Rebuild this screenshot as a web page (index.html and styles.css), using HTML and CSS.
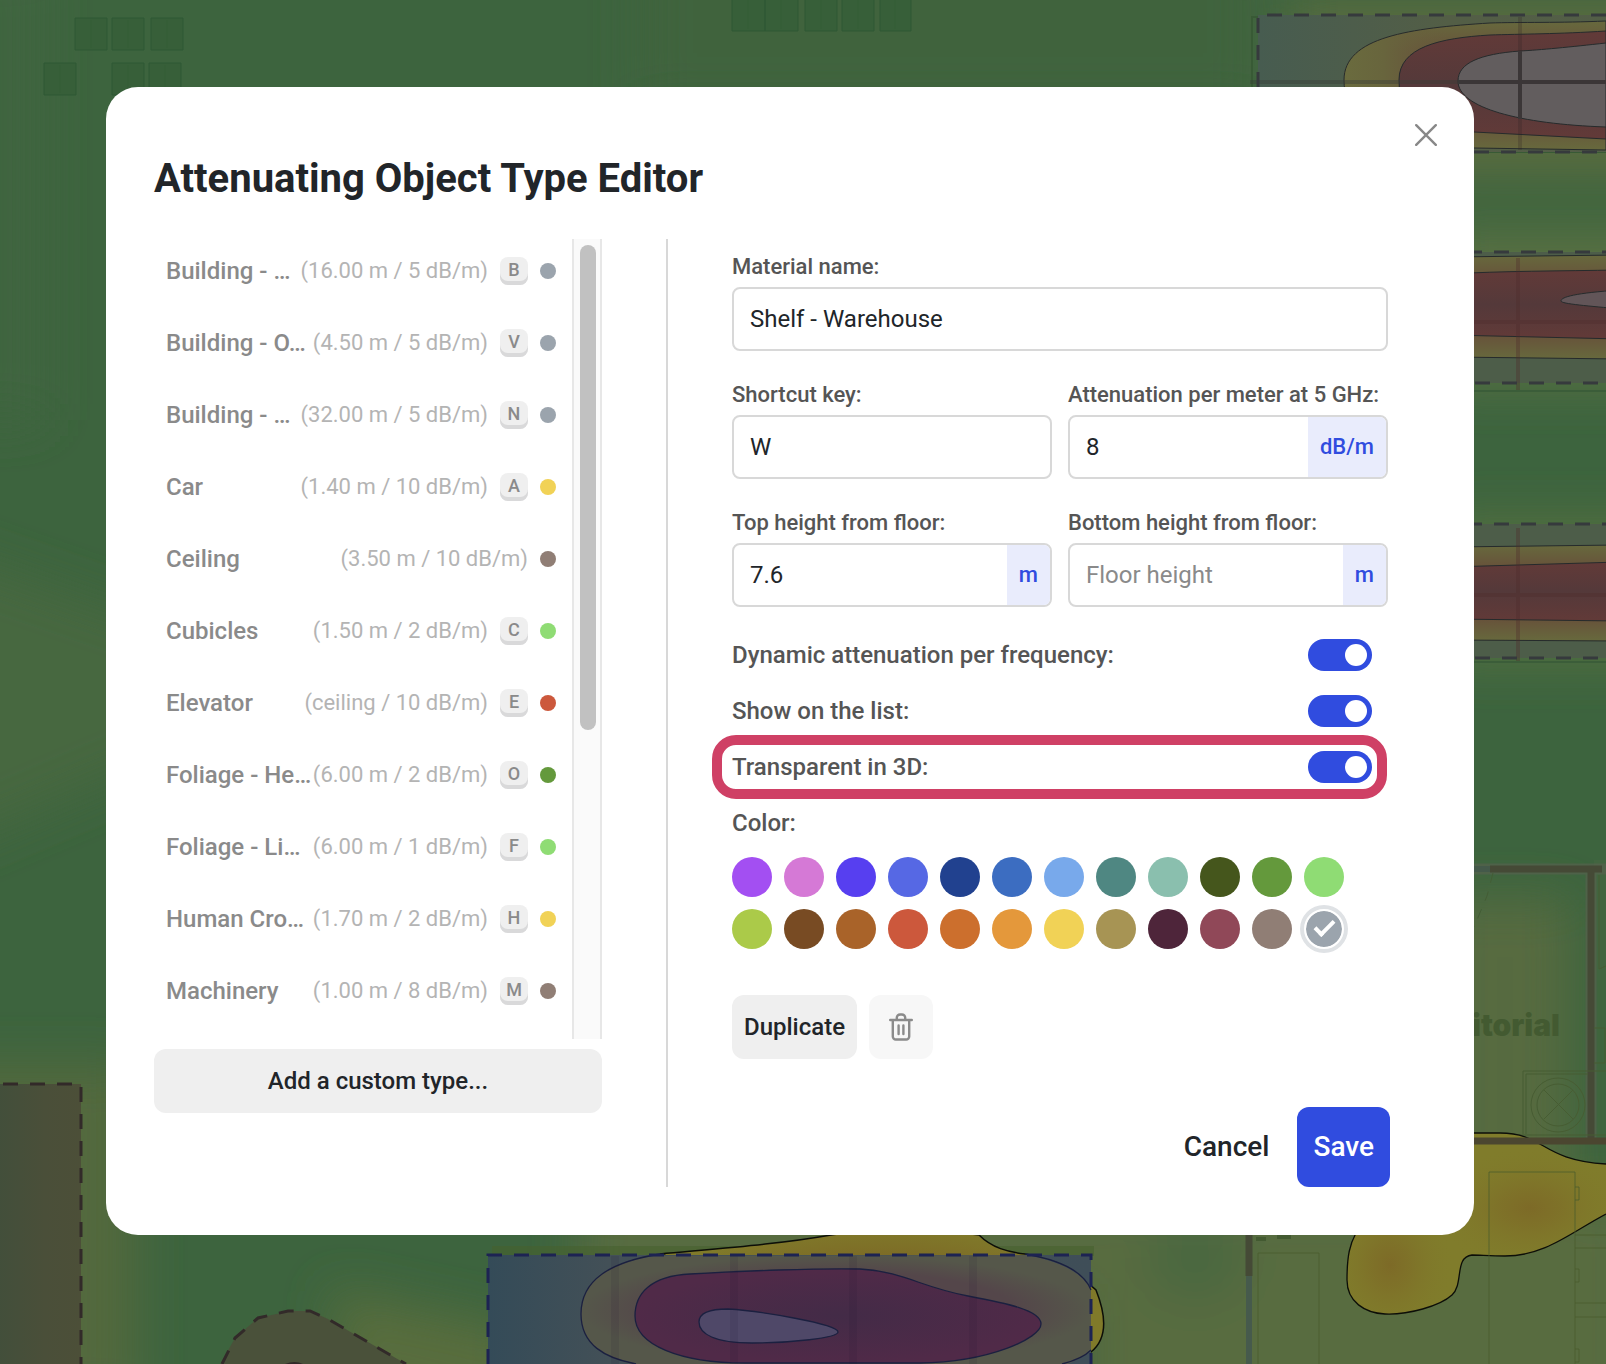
FILE: index.html
```html
<!DOCTYPE html>
<html lang="en">
<head>
<meta charset="utf-8">
<meta name="viewport" content="width=device-width, initial-scale=1">
<title>Attenuating Object Type Editor</title>
<link rel="stylesheet" href="styles.css">
</head>
<body>
<svg class="floorplan" viewBox="0 0 1606 1364" preserveAspectRatio="xMidYMid slice" aria-hidden="true">
  <defs>
    <filter id="soft" x="-50%" y="-50%" width="200%" height="200%"><feGaussianBlur stdDeviation="24"/></filter>
    <linearGradient id="rack" x1="0" x2="1"><stop offset="0" stop-color="#475c50"/><stop offset=".5" stop-color="#535e46"/><stop offset="1" stop-color="#525e47"/></linearGradient>
    <linearGradient id="warm" x1="0" x2="0" y1="0" y2="1"><stop offset="0" stop-color="#67693d"/><stop offset=".25" stop-color="#67503a"/><stop offset=".75" stop-color="#67503a"/><stop offset="1" stop-color="#67693d"/></linearGradient>
    <linearGradient id="warm-edge" x1="0" x2="1"><stop offset="0" stop-color="#6a6b3e"/><stop offset=".15" stop-color="#68653d"/><stop offset=".4" stop-color="#68603d" stop-opacity="0"/></linearGradient>
    <linearGradient id="hot" x1="0" x2="0" y1="0" y2="1"><stop offset="0" stop-color="#623a38"/><stop offset=".5" stop-color="#54393a"/><stop offset="1" stop-color="#623a38"/></linearGradient>
    <linearGradient id="block" x1="0" x2="1"><stop offset="0" stop-color="#414f3b"/><stop offset=".6" stop-color="#4a4f39"/><stop offset="1" stop-color="#4c4f38"/></linearGradient>
    <linearGradient id="blue" x1="0" x2="1"><stop offset="0" stop-color="#344b58"/><stop offset=".2" stop-color="#435057"/><stop offset="1" stop-color="#3f4e58"/></linearGradient>
    <radialGradient id="ring"><stop offset=".7" stop-color="#54464a"/><stop offset="1" stop-color="#55574a"/></radialGradient>
    <radialGradient id="core"><stop offset="0" stop-color="#432b47"/><stop offset="1" stop-color="#502a48"/></radialGradient>
    <radialGradient id="amber"><stop offset="0" stop-color="#7d6a27"/><stop offset=".3" stop-color="#7e6f28" stop-opacity=".8"/><stop offset="1" stop-color="#807c2b" stop-opacity="0"/></radialGradient>
    <radialGradient id="ember"><stop offset="0" stop-color="#795a22"/><stop offset="1" stop-color="#807a2a"/></radialGradient>
    <clipPath id="blob"><path d="M1470 1133H1500C1545 1133 1540 1160 1606 1164V1214C1570 1233 1545 1256 1505 1256C1490 1256 1480 1255 1472 1255C1454 1257 1464 1284 1452 1295C1440 1306 1408 1315 1385 1314C1365 1313 1347 1302 1347 1280C1347 1255 1350 1244 1356 1233L1440 1180Z"/></clipPath>
  </defs>
  <rect width="1606" height="1364" fill="#3d643e"/>
  <g filter="url(#soft)">
    <rect x="640" y="-60" width="620" height="170" fill="#40643e"/>
    <rect x="-60" y="-40" width="100" height="460" fill="#40653f"/>
    <path d="M-60 550 L200 640 L200 740 L-60 850Z" fill="#47673f"/>
    <rect x="-60" y="1065" width="195" height="340" fill="#53693c"/>
    <path d="M330 1290 L520 1330 L520 1420 L350 1420Z" fill="#596d3d"/>
    <rect x="1080" y="1200" width="560" height="220" fill="#586c40"/>
    <rect x="580" y="1200" width="560" height="100" fill="#586c40"/>
    <path d="M1440 900H1570V1200H1440Z" fill="#566b3f"/>
    <rect x="1290" y="0" width="380" height="175" fill="#5a6c40"/>
    <rect x="1440" y="230" width="220" height="155" fill="#587042"/>
    <rect x="1440" y="520" width="220" height="140" fill="#557040"/>
    <ellipse cx="1195" cy="1260" rx="50" ry="40" fill="#4a673f"/>
  </g>

  <!-- parking bays -->
  <g fill="#375f39" stroke="#2f5934" stroke-width="1">
    <path d="M75 18h32v32h-32zM112 18h32v32h-32zM151 18h32v32h-32zM44 63h32v32h-32zM112 63h32v32h-32zM149 63h32v32h-32z"/>
    <path d="M732-2h33v33h-33zM765-2h33v33h-33zM805-2h32v33h-32zM842-2h32v33h-32zM880-2h31v33h-31z"/>
    <path d="M91 20v28M128 20v28M167 20v28M60 65v28M128 65v28M165 65v28M748 0v29M781 0v29M821 0v29M858 0v29M895 0v29" stroke-opacity=".4"/>
  </g>

  <!-- upper rack -->
  <rect x="1252" y="17" width="380" height="135" fill="none" stroke="#385a35" stroke-width="2"/>
  <rect x="1258" y="15" width="380" height="137" fill="url(#rack)"/>
  <path d="M1606 21C1560 23 1520 22 1490 23C1410 28 1344 37 1344 80C1344 140 1420 148 1474 148L1606 150Z" fill="url(#warm)"/>
  <path d="M1606 21C1560 23 1520 22 1490 23C1410 28 1344 37 1344 80C1344 140 1420 148 1474 148L1606 150Z" fill="url(#warm-edge)" stroke="#262b2c"/>
  <path d="M1606 31C1560 34 1520 34 1490 35C1440 38 1399 47 1399 80C1399 125 1430 131 1474 132L1606 139Z" fill="url(#hot)" stroke="#262b2c"/>
  <path d="M1606 43C1570 47 1540 50 1520 51C1480 54 1458 63 1458 81C1458 108 1520 124 1606 127Z" fill="#625d5e" stroke="#262b2c"/>
  <path d="M1520 17V150" stroke="#302523" stroke-opacity=".25" stroke-width="4"/>
  <path d="M1520 51V119M1458 82H1606" stroke="#3b3637" stroke-width="4"/>
  <path d="M1250 82H1460" stroke="#383d37" stroke-opacity=".4" stroke-width="4"/>
  <path d="M1606 15H1258V100M1474 152H1606" class="dash" stroke="#363a3d"/>

  <!-- middle rack -->
  <rect x="1450" y="252" width="170" height="131" fill="#4d5d49"/>
  <path d="M1450 257L1620 255V359L1450 357Z" fill="url(#warm)" stroke="#262b2c"/>
  <path d="M1450 274C1500 271 1560 271 1620 270V339L1450 335Z" fill="url(#hot)" stroke="#262b2c"/>
  <path d="M1620 290C1575 293 1561 297 1561 301C1561 304 1590 306 1620 309Z" fill="#625558" stroke="#262b2c"/>
  <path d="M1518 258V391M1450 322H1606" stroke="#4c2c2a" stroke-opacity=".35" stroke-width="4"/>
  <path d="M1440 252H1606M1448 383H1606" class="dash" stroke="#363a3d"/>
  <path d="M1450 391H1606" stroke="#3b5d39" stroke-width="2"/>

  <!-- lower rack -->
  <rect x="1450" y="524" width="170" height="134" fill="#4d5d49"/>
  <path d="M1450 547L1620 545V641L1450 640Z" fill="url(#warm)" stroke="#262b2c"/>
  <path d="M1450 567L1620 562V621L1450 619Z" fill="url(#hot)" stroke="#262b2c"/>
  <path d="M1518 528V661M1450 595H1606" stroke="#4c2c2a" stroke-opacity=".35" stroke-width="4"/>
  <path d="M1440 524H1606M1448 658H1606" class="dash" stroke="#363a3d"/>
  <path d="M1450 662H1606" stroke="#3b5d39" stroke-width="2"/>

  <!-- janitorial room -->
  <rect x="1594" y="860" width="20" height="120" fill="#426540"/>
  <path d="M1470 869H1606M1591 869V1141" stroke="#5a6150" stroke-width="11" opacity=".6"/>
  <path d="M1470 869H1490" stroke="#44594a" stroke-width="6"/>
  <path d="M1490 869H1602M1591 869V1141" fill="none" stroke="#454a36" stroke-width="7"/>
  <path d="M1493 873L1487 896L1474 927" fill="none" stroke="#435d35" stroke-dasharray="10 9"/>
  <text x="1560" y="1036" text-anchor="end" class="room-name">itorial</text>
  <g fill="none" stroke="#475d33">
    <path d="M1523 1134V1071H1606M1526 1134V1074H1588M1470 1135H1606M1594 1028H1605V1063H1594M1599 875V969L1606 966"/>
    <circle cx="1558" cy="1105" r="27"/><circle cx="1558" cy="1105" r="21"/>
    <path d="M1544 1090L1573 1119M1573 1090L1544 1119"/>
  </g>
  <g clip-path="url(#blob)">
    <rect x="1340" y="1120" width="270" height="200" fill="#807c2b"/>
    <ellipse cx="1390" cy="1265" rx="65" ry="75" fill="url(#amber)"/>
    <ellipse cx="1530" cy="1208" rx="100" ry="62" fill="url(#amber)"/>
  </g>
  <path d="M1470 1133H1500C1545 1133 1540 1160 1606 1164M1606 1214C1570 1233 1545 1256 1505 1256C1490 1256 1480 1255 1472 1255C1454 1257 1464 1284 1452 1295C1440 1306 1408 1315 1385 1314C1365 1313 1347 1302 1347 1280C1347 1255 1350 1244 1356 1233" fill="none" stroke="#0c0e08" stroke-width="1.3"/>
  <path d="M1470 1141H1606" stroke="#4b4630" stroke-width="7"/>
  <g fill="none" stroke="#4a5b2b" stroke-opacity=".75">
    <path d="M1489 1370V1172H1575V1370M1575 1187h4v13h-4M1575 1269h4v13h-4M1575 1349h4v13h-4M1575 1235H1606M1575 1248H1606M1575 1303H1606M1575 1317H1606M1258 1370V1253H1319V1370"/>
  </g>
  <path d="M1249 1230V1276" stroke="#454a36" stroke-width="7"/>
  <path d="M1249 1276V1364" stroke="#465a4c" stroke-width="6"/>
  <path d="M1256 1239h10M1277 1237h14" stroke="#435a31" stroke-width="4"/>

  <!-- blocks on the left -->
  <rect x="-10" y="1084" width="91" height="290" fill="url(#block)"/>
  <path d="M3 1084H81V1364" class="dash" stroke="#322a29"/>
  <path d="M216 1372L235 1338L258 1318L290 1311H310L328 1319L420 1372Z" fill="#4a513a"/>
  <path d="M222 1364L235 1338L258 1318L288 1311H310L328 1319L406 1364" class="dash" stroke="#322a29"/>
  <path d="M285 1364Q295 1360 303 1364" fill="#322a29"/>

  <!-- selected block -->
  <rect x="492" y="1246" width="602" height="10" fill="#46612f" opacity=".6"/>
  <path d="M660 1254C725 1248 780 1244 831 1235L900 1225L979 1235C992 1248 1008 1252 1025 1254C1050 1258 1078 1268 1088 1283L1096 1290C1108 1320 1106 1340 1091 1352L1060 1366Z" fill="url(#ember)" stroke="#0c0e08" stroke-width="1.5"/>
  <rect x="488" y="1255" width="603" height="120" fill="url(#blue)"/>
  <path d="M655 1256C610 1262 581 1280 581 1314C581 1345 605 1358 640 1366H1062Q1082 1359 1091 1350V1290C1080 1268 1050 1260 1027 1255Z" fill="url(#ring)"/>
  <path d="M660 1254C610 1262 581 1280 581 1314C581 1345 605 1358 636 1364M1025 1254C1060 1260 1084 1272 1091 1290M1091 1350Q1082 1359 1062 1364" fill="none" stroke="#1b2040" stroke-width="1.3"/>
  <path d="M690 1274C740 1271 820 1268 860 1269C905 1272 920 1287 968 1296C1005 1303 1041 1310 1041 1324C1041 1338 990 1362 920 1363H745C680 1363 635 1345 635 1316C635 1294 650 1276 690 1274Z" fill="url(#core)" stroke="#1b2040" stroke-width="1.3"/>
  <path d="M699 1322C699 1312 712 1309 728 1309C760 1311 838 1324 838 1332C838 1338 790 1343 752 1343C715 1343 699 1334 699 1322Z" fill="#4f4868" stroke="#1b2040" stroke-width="1.3"/>
  <path d="M615 1256V1364M734 1256V1364M853 1256V1364M973 1256V1364" stroke="#1e1830" stroke-opacity=".1" stroke-width="8"/>
  <path d="M488 1364V1255H1091V1364" class="dash" stroke="#1d2353"/>
</svg>

<main class="overlay">
  <section class="modal" role="dialog" aria-modal="true" aria-labelledby="dialog-title">
    <button class="close" type="button" aria-label="Close">
      <svg width="22" height="22" viewBox="0 0 22 22" fill="none" stroke="#888" stroke-width="2.4" stroke-linecap="round"><path d="M1.2 1.2L20.8 20.8M20.8 1.2L1.2 20.8"/></svg>
    </button>
    <h1 class="title" id="dialog-title">Attenuating Object Type Editor</h1>
    <div class="body">
      <div class="types">
        <div class="list-wrap">
          <ul class="list">
            <li class="type"><span class="name">Building - …</span><span class="spec">(16.00 m / 5 dB/m)</span><kbd class="key">B</kbd><i class="dot slate"></i></li>
            <li class="type"><span class="name">Building - O…</span><span class="spec">(4.50 m / 5 dB/m)</span><kbd class="key">V</kbd><i class="dot slate"></i></li>
            <li class="type"><span class="name">Building - …</span><span class="spec">(32.00 m / 5 dB/m)</span><kbd class="key">N</kbd><i class="dot slate"></i></li>
            <li class="type"><span class="name">Car</span><span class="spec">(1.40 m / 10 dB/m)</span><kbd class="key">A</kbd><i class="dot yellow"></i></li>
            <li class="type"><span class="name">Ceiling</span><span class="spec">(3.50 m / 10 dB/m)</span><i class="dot taupe"></i></li>
            <li class="type"><span class="name">Cubicles</span><span class="spec">(1.50 m / 2 dB/m)</span><kbd class="key">C</kbd><i class="dot lime"></i></li>
            <li class="type"><span class="name">Elevator</span><span class="spec">(ceiling / 10 dB/m)</span><kbd class="key">E</kbd><i class="dot red"></i></li>
            <li class="type"><span class="name">Foliage - He…</span><span class="spec">(6.00 m / 2 dB/m)</span><kbd class="key">O</kbd><i class="dot green"></i></li>
            <li class="type"><span class="name">Foliage - Li…</span><span class="spec">(6.00 m / 1 dB/m)</span><kbd class="key">F</kbd><i class="dot lime"></i></li>
            <li class="type"><span class="name">Human Cro…</span><span class="spec">(1.70 m / 2 dB/m)</span><kbd class="key">H</kbd><i class="dot yellow"></i></li>
            <li class="type"><span class="name">Machinery</span><span class="spec">(1.00 m / 8 dB/m)</span><kbd class="key">M</kbd><i class="dot taupe"></i></li>
          </ul>
          <div class="track"><div class="thumb"></div></div>
        </div>
        <button class="btn add" type="button">Add a custom type...</button>
      </div>

      <form class="form">
        <div class="fields">
          <div class="field wide">
            <label for="material">Material name:</label>
            <div class="box"><input id="material" type="text" value="Shelf - Warehouse"></div>
          </div>
          <div class="field">
            <label for="shortcut">Shortcut key:</label>
            <div class="box"><input id="shortcut" type="text" value="W"></div>
          </div>
          <div class="field">
            <label for="attenuation">Attenuation per meter at 5 GHz:</label>
            <div class="box"><input id="attenuation" type="text" value="8"><span class="unit">dB/m</span></div>
          </div>
          <div class="field">
            <label for="top">Top height from floor:</label>
            <div class="box"><input id="top" type="text" value="7.6"><span class="unit">m</span></div>
          </div>
          <div class="field">
            <label for="bottom">Bottom height from floor:</label>
            <div class="box"><input id="bottom" type="text" placeholder="Floor height"><span class="unit">m</span></div>
          </div>
        </div>

        <div class="options">
          <div class="option"><label for="dynamic">Dynamic attenuation per frequency:</label><input class="toggle" id="dynamic" type="checkbox" role="switch" checked></div>
          <div class="option"><label for="show">Show on the list:</label><input class="toggle" id="show" type="checkbox" role="switch" checked></div>
          <div class="option highlighted"><label for="transparent">Transparent in 3D:</label><input class="toggle" id="transparent" type="checkbox" role="switch" checked></div>
          <div class="option" id="color-label">Color:</div>
        </div>

        <div class="swatches" role="radiogroup" aria-labelledby="color-label">
          <input type="radio" name="color" aria-label="Violet" style="--c:#a34ff2">
          <input type="radio" name="color" aria-label="Orchid" style="--c:#d579d6">
          <input type="radio" name="color" aria-label="Indigo" style="--c:#573ff0">
          <input type="radio" name="color" aria-label="Periwinkle" style="--c:#5668e4">
          <input type="radio" name="color" aria-label="Navy" style="--c:#21418f">
          <input type="radio" name="color" aria-label="Blue" style="--c:#3c6dc1">
          <input type="radio" name="color" aria-label="Sky" style="--c:#78a9eb">
          <input type="radio" name="color" aria-label="Teal" style="--c:#4f8782">
          <input type="radio" name="color" aria-label="Mint" style="--c:#8abfae">
          <input type="radio" name="color" aria-label="Moss" style="--c:#45561c">
          <input type="radio" name="color" aria-label="Green" style="--c:#64993c">
          <input type="radio" name="color" aria-label="Light green" style="--c:#8fdc74">
          <input type="radio" name="color" aria-label="Lime" style="--c:#abca49">
          <input type="radio" name="color" aria-label="Brown" style="--c:#784b23">
          <input type="radio" name="color" aria-label="Copper" style="--c:#a96329">
          <input type="radio" name="color" aria-label="Red" style="--c:#cc583c">
          <input type="radio" name="color" aria-label="Rust" style="--c:#cc6f2d">
          <input type="radio" name="color" aria-label="Orange" style="--c:#e4983b">
          <input type="radio" name="color" aria-label="Yellow" style="--c:#f1d256">
          <input type="radio" name="color" aria-label="Khaki" style="--c:#a79454">
          <input type="radio" name="color" aria-label="Plum" style="--c:#4e253a">
          <input type="radio" name="color" aria-label="Wine" style="--c:#904858">
          <input type="radio" name="color" aria-label="Taupe" style="--c:#907e75">
          <input type="radio" name="color" aria-label="Slate" style="--c:#9ba4ad" checked>
        </div>

        <div class="tools">
          <button class="btn" type="button">Duplicate</button>
          <button class="btn trash" type="button" aria-label="Delete">
            <svg width="24" height="28" viewBox="0 0 24 28" fill="none" stroke="#8b8b8b" stroke-width="2.4" stroke-linecap="round" stroke-linejoin="round"><path d="M1.2 7H22.8M7.8 6.5V4.8A3.3 3.3 0 0 1 11.1 1.5H12.9A3.3 3.3 0 0 1 16.2 4.8V6.5M3.8 7.5V23.5A3 3 0 0 0 6.8 26.5H17.2A3 3 0 0 0 20.2 23.5V7.5M9.6 12.5V21M14.4 12.5V21"/></svg>
          </button>
        </div>

        <div class="actions">
          <button class="action" type="button">Cancel</button>
          <button class="action save" type="submit">Save</button>
        </div>
      </form>
    </div>
  </section>
</main>
</body>
</html>
```
FILE: styles.css
```css
*,
*::before,
*::after {
  box-sizing: border-box;
}

body {
  margin: 0;
  background: #3d643e;
  color: #212529;
  font-family: Roboto, "Liberation Sans", sans-serif;
  font-size: 24px;
  line-height: 32px;
}

button,
input {
  margin: 0;
  font: inherit;
  color: inherit;
}

button {
  border: 0;
  cursor: pointer;
}

.floorplan {
  position: fixed;
  inset: 0;
  width: 100%;
  height: 100%;
}

.dash {
  fill: none;
  stroke-width: 3;
  stroke-dasharray: 15 12;
}

.room-name {
  fill: #435a31;
  font: 900 30px Inter, sans-serif;
}

/* Dialog */

.overlay {
  position: relative;
  display: flex;
  justify-content: center;
  align-items: flex-start;
  padding: 87px 132px 129px 106px;
}

.modal {
  position: relative;
  flex: 1;
  max-width: 1368px;
  padding: 68px 84px 48px 48px;
  border-radius: 32px;
  background: #fff;
}

.close {
  position: absolute;
  top: 28px;
  right: 28px;
  display: flex;
  align-items: center;
  justify-content: center;
  width: 40px;
  height: 40px;
  padding: 0;
  background: none;
}

.title {
  margin: 0 0 36px;
  font-size: 40px;
  line-height: 48px;
  font-weight: 700;
}

.body {
  display: flex;
}

/* Type list */

.types {
  flex: 0 0 448px;
  min-width: 0;
  margin-right: 64px;
}

.list-wrap {
  display: flex;
  height: 800px;
  margin-bottom: 10px;
}

.list {
  display: flex;
  flex: 1;
  flex-direction: column;
  gap: 8px;
  min-width: 0;
  margin: 0;
  padding: 0;
  list-style: none;
  overflow: hidden;
}

.type {
  display: flex;
  flex: none;
  align-items: center;
  height: 64px;
  padding: 0 16px 0 12px;
}

.name {
  flex: 1;
  min-width: 0;
  white-space: nowrap;
  color: #8a8a8a;
  font-weight: 500;
}

.spec {
  margin-right: 12px;
  white-space: nowrap;
  color: #b4b4b4;
  font-size: 22px;
}

.key {
  width: 28px;
  height: 28px;
  margin-right: 12px;
  border-radius: 8px;
  background: #efefef;
  box-shadow: inset 0 -4px #d9d9da;
  color: #8a8a8a;
  font-family: inherit;
  font-size: 18px;
  line-height: 25px;
  font-weight: 500;
  text-align: center;
}

.dot {
  width: 16px;
  height: 16px;
  border-radius: 50%;
}

.slate { background: #9ba4ad; }
.yellow { background: #f1d256; }
.taupe { background: #907e75; }
.lime { background: #8fdc74; }
.red { background: #cc583c; }
.green { background: #64993c; }

.track {
  flex: 0 0 30px;
  padding: 6px 4px 6px 6px;
  border: solid #e7e7e7;
  border-width: 0 2px;
  background: #fafafa;
}

.thumb {
  width: 16px;
  height: 485px;
  border-radius: 8px;
  background: #c1c1c1;
}

.btn {
  height: 64px;
  padding: 0 12px;
  border-radius: 12px;
  background: #efefef;
  font-weight: 500;
}

.add {
  width: 100%;
}

/* Editor form */

.form {
  display: flex;
  flex: 1;
  flex-direction: column;
  min-width: 0;
  padding: 12px 0 0 64px;
  border-left: 2px solid #d8d8d8;
}

.fields {
  display: grid;
  grid-template-columns: repeat(2, minmax(0, 1fr));
  gap: 28px 16px;
  padding-right: 2px;
}

.wide {
  grid-column: 1 / -1;
}

.field label {
  display: block;
  margin-bottom: 4px;
  color: #555;
  font-size: 22px;
  font-weight: 500;
  white-space: nowrap;
}

.box {
  display: flex;
  height: 64px;
  overflow: hidden;
  border: 2px solid #d8d8d8;
  border-radius: 8px;
}

.box input {
  flex: 1;
  min-width: 0;
  padding: 0 16px;
  border: 0;
  outline: 0;
  background: none;
}

.box input::placeholder {
  color: #8a8a8a;
  opacity: 1;
}

.unit {
  display: flex;
  align-items: center;
  padding: 0 12px;
  background: #e9ecfc;
  color: #304cdf;
  font-size: 22px;
  font-weight: 500;
}

.options {
  display: grid;
  gap: 24px;
  margin-top: 32px;
  padding-right: 18px;
  color: #555;
  font-weight: 500;
}

.option {
  position: relative;
  display: flex;
  align-items: center;
  justify-content: space-between;
  height: 32px;
}

.highlighted::after {
  content: "";
  position: absolute;
  inset: -16px -15px -16px -20px;
  border: 10px solid #cf4065;
  border-radius: 24px;
  pointer-events: none;
}

.toggle {
  appearance: none;
  display: flex;
  width: 64px;
  height: 32px;
  padding: 5px;
  border-radius: 16px;
  background: #c1c1c1;
}

.toggle::before {
  content: "";
  width: 22px;
  height: 22px;
  border-radius: 50%;
  background: #fff;
}

.toggle:checked {
  justify-content: flex-end;
  background: #304cdf;
}

.swatches {
  display: grid;
  grid-template-columns: repeat(12, 40px);
  gap: 12px;
  margin-top: 18px;
}

.swatches input {
  appearance: none;
  display: flex;
  align-items: center;
  justify-content: center;
  width: 40px;
  height: 40px;
  border-radius: 50%;
  background: var(--c);
}

.swatches input:checked {
  border: 2px solid #fff;
  background-clip: padding-box;
  box-shadow: 0 0 0 4px #dfe2e5;
}

.swatches input:checked::before {
  content: "";
  width: 11px;
  height: 20px;
  margin-bottom: 6px;
  border: solid #fff;
  border-width: 0 4px 4px 0;
  rotate: 45deg;
}

.tools {
  display: flex;
  gap: 12px;
  margin-top: 46px;
}

.trash {
  display: flex;
  align-items: center;
  justify-content: center;
  width: 64px;
  background: #f7f7f7;
}

.actions {
  display: flex;
  justify-content: flex-end;
  gap: 12px;
  margin-top: 48px;
}

.action {
  height: 80px;
  padding: 0 16px;
  border-radius: 12px;
  background: none;
  font-size: 28px;
  font-weight: 500;
}

.save {
  background: #304cdf;
  color: #fff;
}
```
